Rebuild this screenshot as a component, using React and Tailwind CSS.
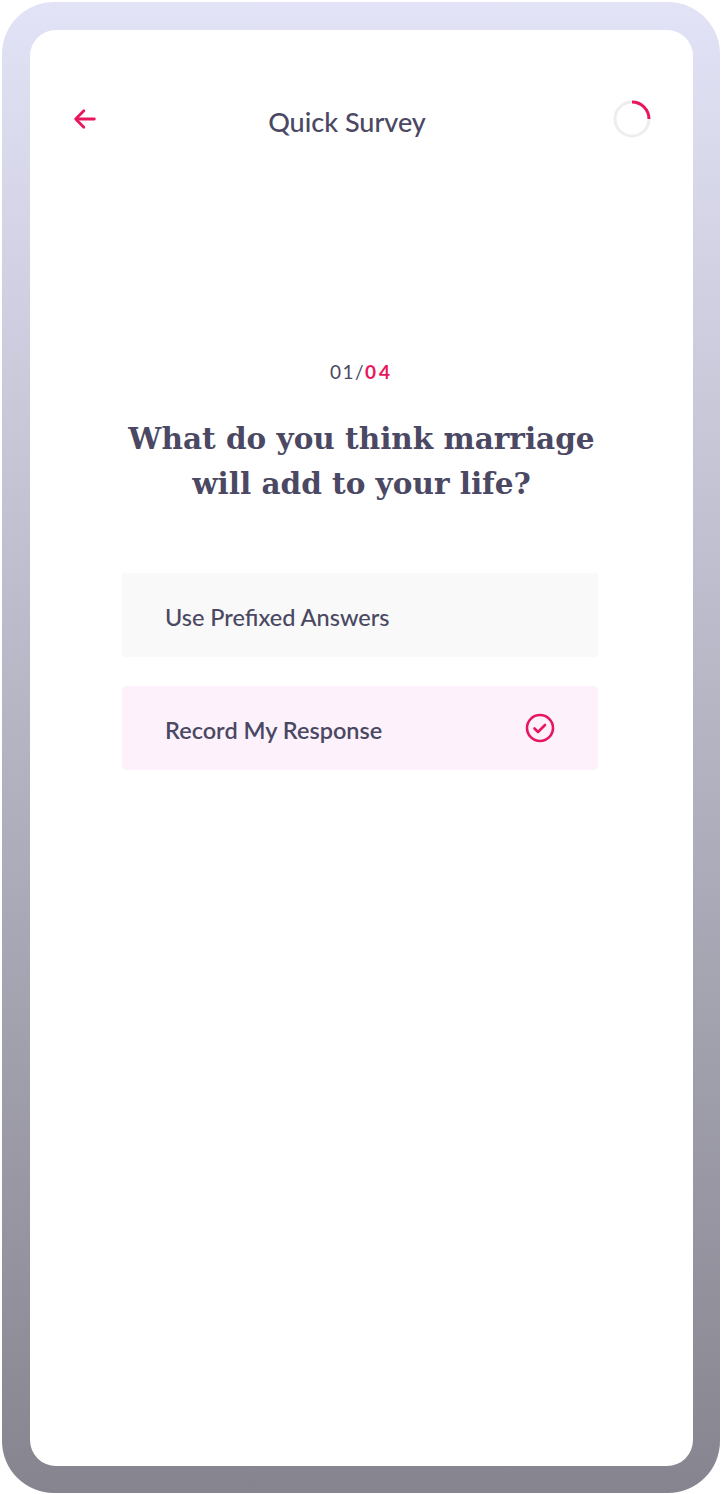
import React from "react";

const Arrow = () => (
  <svg width="28" height="28" viewBox="0 0 24 24" fill="none" stroke="#e8175d" strokeWidth="2.4" strokeLinecap="round" strokeLinejoin="round">
    <path d="M20 12H5" />
    <path d="M11 5l-7 7 7 7" />
  </svg>
);

const ProgressRing = () => (
  <svg width="38" height="38" viewBox="0 0 38 38">
    <circle cx="19" cy="19" r="17" fill="none" stroke="#eeeeee" strokeWidth="3" />
    <path d="M19 2 A17 17 0 0 1 36 19" fill="none" stroke="#e8175d" strokeWidth="3" />
  </svg>
);

const CheckCircle = () => (
  <svg width="30" height="30" viewBox="0 0 30 30" fill="none" stroke="#e8175d" strokeWidth="2.6" strokeLinecap="round" strokeLinejoin="round">
    <circle cx="15" cy="15" r="13" />
    <path d="M9.5 15.5l3.5 3.5 7-7" />
  </svg>
);

const options = [
  { label: "Use Prefixed Answers", selected: false },
  { label: "Record My Response", selected: true },
];

export default function App() {
  return (
    <div className="w-[721px] h-[1494px] bg-white p-[2px] pr-[1px] pb-[1px]">
      <div className="w-full h-full rounded-[52px] bg-gradient-to-b from-[#e3e3f7] to-[#86858f] pt-[28px] pl-[28px] pr-[27px] pb-[27px]">
        <div className="w-full h-full bg-white rounded-[26px] flex flex-col text-[#4a4863]" style={{ fontFamily: "Lato, 'Open Sans', sans-serif" }}>
          {/* header */}
          <div className="flex items-center justify-between pl-[41px] pr-[42px] mt-[71px] h-[36px]">
            <Arrow />
            <h1 className="text-[27px] font-medium leading-none -ml-[18px] mt-[4px]">Quick Survey</h1>
            <ProgressRing />
          </div>

          {/* counter */}
          <div className="mt-[225px] text-center text-[19px] tracking-[1.5px] leading-none">
            01/<span className="text-[#e8175d] font-bold tracking-[3px]">04</span>
          </div>

          {/* question */}
          <h2
            className="mt-[35px] text-center text-[29.5px] font-bold leading-[45px] text-[#4a4863]"
            style={{ fontFamily: "'DejaVu Serif', 'Liberation Serif', serif" }}
          >
            What do you think marriage
            <br />
            will add to your life?
          </h2>

          {/* options */}
          <div className="mt-[67px] flex flex-col gap-[29px] pl-[92px] pr-[95px]">
            {options.map((o) => (
              <div
                key={o.label}
                className={`h-[84px] rounded-[4px] flex items-center justify-between pl-[43px] pr-[43px] ${
                  o.selected ? "bg-[#fdf2fc]" : "bg-[#f9f9f9]"
                }`}
              >
                <span className={`text-[23.5px] mt-[6px] ${o.selected ? "font-semibold" : "font-medium"}`}>{o.label}</span>
                {o.selected && <CheckCircle />}
              </div>
            ))}
          </div>
        </div>
      </div>
    </div>
  );
}
